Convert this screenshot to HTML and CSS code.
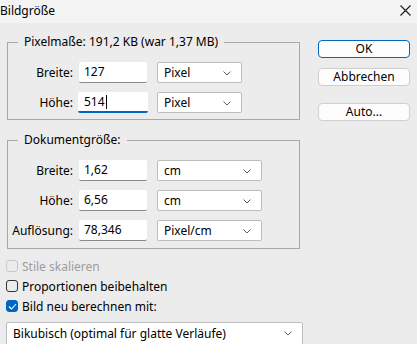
FILE: index.html
```html
<!DOCTYPE html>
<html lang="de">
<head>
  <meta charset="UTF-8">
  <title>Bildgröße</title>
  <link rel="stylesheet" href="styles.css">
</head>
<body>

  <!-- Title bar -->
  <div class="titlebar">
    <span class="title">Bildgröße</span>
    <svg class="close" width="11" height="11" viewBox="0 0 11 11">
      <path d="M0.5 0.5 L10.5 10.5 M10.5 0.5 L0.5 10.5" stroke="#1a1a1a" stroke-width="1.1" fill="none"/>
    </svg>
  </div>

  <div class="dialog">
    <div class="main">

      <!-- Pixel dimensions -->
      <fieldset class="group group-pixel">
        <legend>Pixelmaße: 191,2 KB (war 1,37 MB)</legend>
        <div class="rows">
          <div class="row">
            <span class="label">Breite:</span>
            <div class="field">127</div>
            <div class="select short">Pixel
              <svg class="chev" width="8" height="5" viewBox="0 0 8 5"><path d="M0.5 0.5 L4 4 L7.5 0.5" stroke="#606060" fill="none"/></svg>
            </div>
          </div>
          <div class="row">
            <span class="label">Höhe:</span>
            <div class="field focused">514<span class="caret"></span></div>
            <div class="select short">Pixel
              <svg class="chev" width="8" height="5" viewBox="0 0 8 5"><path d="M0.5 0.5 L4 4 L7.5 0.5" stroke="#606060" fill="none"/></svg>
            </div>
          </div>
        </div>
      </fieldset>

      <!-- Document size -->
      <fieldset class="group group-doc">
        <legend>Dokumentgröße:</legend>
        <div class="rows">
          <div class="row">
            <span class="label">Breite:</span>
            <div class="field">1,62</div>
            <div class="select wide">cm
              <svg class="chev" width="8" height="5" viewBox="0 0 8 5"><path d="M0.5 0.5 L4 4 L7.5 0.5" stroke="#606060" fill="none"/></svg>
            </div>
          </div>
          <div class="row">
            <span class="label">Höhe:</span>
            <div class="field">6,56</div>
            <div class="select wide">cm
              <svg class="chev" width="8" height="5" viewBox="0 0 8 5"><path d="M0.5 0.5 L4 4 L7.5 0.5" stroke="#606060" fill="none"/></svg>
            </div>
          </div>
          <div class="row">
            <span class="label">Auflösung:</span>
            <div class="field">78,346</div>
            <div class="select wide">Pixel/cm
              <svg class="chev" width="8" height="5" viewBox="0 0 8 5"><path d="M0.5 0.5 L4 4 L7.5 0.5" stroke="#606060" fill="none"/></svg>
            </div>
          </div>
        </div>
      </fieldset>

      <!-- Options -->
      <div class="checks">
        <div class="check disabled"><span class="box"></span>Stile skalieren</div>
        <div class="check"><span class="box"></span>Proportionen beibehalten</div>
        <div class="check"><span class="box checked">
          <svg width="9" height="7" viewBox="0 0 9 7"><path d="M1 3.5 L3.5 6 L8 1" stroke="#fff" stroke-width="1.1" fill="none"/></svg>
        </span>Bild neu berechnen mit:</div>
      </div>

      <div class="select method">Bikubisch (optimal für glatte Verläufe)
        <svg class="chev" width="8" height="5" viewBox="0 0 8 5"><path d="M0.5 0.5 L4 4 L7.5 0.5" stroke="#606060" fill="none"/></svg>
      </div>
    </div>

    <!-- Buttons -->
    <div class="buttons">
      <button class="btn default">OK</button>
      <button class="btn">Abbrechen</button>
      <button class="btn auto">Auto...</button>
    </div>
  </div>

</body>
</html>
```

FILE: styles.css
```css
* {
  margin: 0;
  padding: 0;
  box-sizing: border-box;
}

body {
  font-family: "Noto Sans", "Open Sans", sans-serif;
  font-size: 12px;
  color: #000;
  background: #ececec;
  width: 417px;
  height: 344px;
  overflow: hidden;
}

/* Title bar */
.titlebar {
  height: 23px;
  background: #f3f3f3;
  display: flex;
  align-items: center;
  justify-content: space-between;
  padding: 0 6px 2px 0;
}

.title {
  font-size: 12px;
}

/* Dialog body */
.dialog {
  display: flex;
  padding-left: 7px;
}

.main {
  width: 296px;
}

/* Group boxes */
.group {
  border: 1px solid #a8a8a8;
  width: 293px;
  padding: 0;
}

.group legend {
  margin-left: 10px;
  padding: 0 6px;
  line-height: 16px;
}

.group-pixel {
  margin-top: 11px;
  height: 86px;
}

.group-doc {
  margin-top: 12px;
  height: 117px;
}

.rows {
  display: flex;
  flex-direction: column;
  gap: 9px;
  padding-top: 12px;
}

.row {
  display: flex;
  align-items: center;
  height: 21px;
}

.label {
  width: 65px;
  text-align: right;
  margin-right: 6px;
}

.field {
  width: 68px;
  height: 21px;
  background: #fff;
  border-bottom: 1px solid #8a8a8a;
  border-radius: 2px;
  padding-left: 5px;
  line-height: 20px;
  margin-right: 10px;
  display: flex;
  align-items: center;
}

.field.focused {
  border-bottom: 2px solid #0067c0;
  width: 70px;
  margin-left: -1px;
  margin-right: 9px;
  padding-left: 6px;
}

.caret {
  display: inline-block;
  width: 1px;
  height: 14px;
  background: #000;
  margin-left: 1px;
}

/* Dropdowns */
.select {
  position: relative;
  height: 21px;
  background: #fff;
  border: 1px solid #bdbdbd;
  border-radius: 2px;
  padding-left: 6px;
  line-height: 19px;
}

.select.short {
  width: 85px;
}

.select.wide {
  width: 105px;
}

.chev {
  position: absolute;
  right: 10px;
  top: 8px;
}

.select.method {
  width: 297px;
  height: 23px;
  margin-left: -1px;
  margin-top: 8px;
  line-height: 21px;
}

/* Checkboxes */
.checks {
  display: flex;
  flex-direction: column;
  gap: 4px;
  margin-top: 9px;
}

.check {
  display: flex;
  align-items: center;
  height: 16px;
  margin-left: -1px;
}

.check.disabled {
  color: #9d9d9d;
}

.box {
  width: 12px;
  height: 12px;
  border: 1px solid #333;
  border-radius: 3px;
  margin-right: 4px;
  display: flex;
  align-items: center;
  justify-content: center;
}

.check.disabled .box {
  border-color: #c8c8c8;
}

.box.checked {
  background: #0067c0;
  border-color: #0067c0;
}

/* Buttons */
.buttons {
  display: flex;
  flex-direction: column;
  margin-left: 15px;
  padding-top: 17px;
}

.btn {
  width: 92px;
  height: 18px;
  font-family: inherit;
  font-size: 12px;
  background: #fdfdfd;
  border: 1px solid #cfcfcf;
  border-radius: 4px;
  line-height: 16px;
  margin-bottom: 10px;
}

.btn.default {
  border-color: #0067c0;
}

.btn.auto {
  margin-top: 7px;
}
```
